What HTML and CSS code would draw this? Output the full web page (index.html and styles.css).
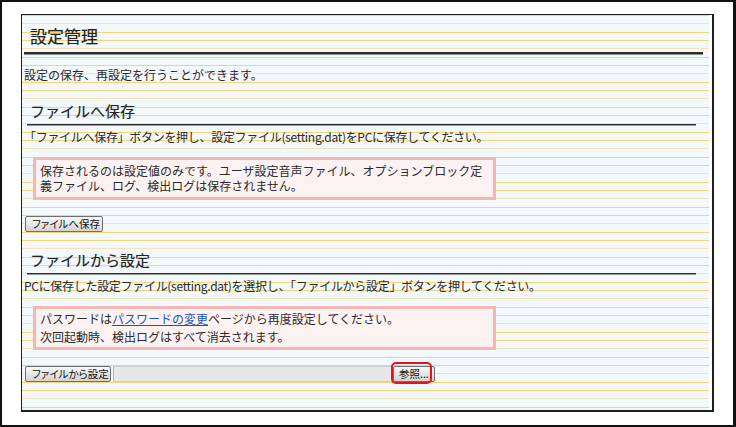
FILE: index.html
```html
<!DOCTYPE html>
<html lang="ja">
<head>
<meta charset="utf-8">
<title>設定管理</title>
<link rel="stylesheet" href="styles.css">
</head>
<body>
<div class="screen">
  <div class="panel">
    <h1 class="title">設定管理</h1>
    <p class="text">設定の保存、再設定を行うことができます。</p>

    <h2 class="section">ファイルへ保存</h2>
    <p class="text text-tight">「ファイルへ保存」ボタンを押し、設定ファイル(setting.dat)をPCに保存してください。</p>
    <div class="note">保存されるのは設定値のみです。ユーザ設定音声ファイル、オプションブロック定義ファイル、ログ、検出ログは保存されません。</div>
    <div class="actions">
      <button class="btn btn-save" type="button">ファイルへ保存</button>
    </div>

    <h2 class="section">ファイルから設定</h2>
    <p class="text text-tight">PCに保存した設定ファイル(setting.dat)を選択し、「ファイルから設定」ボタンを押してください。</p>
    <div class="note note-split">
      <span class="note-line">パスワードは<a class="link" href="#">パスワードの変更</a>ページから再度設定してください。</span>
      <span class="note-line">次回起動時、検出ログはすべて消去されます。</span>
    </div>
    <div class="actions">
      <button class="btn btn-load" type="button">ファイルから設定</button>
      <span class="file-field"></span>
      <span class="browse-wrap"><button class="btn btn-browse" type="button">参照...</button></span>
    </div>
  </div>
</div>
</body>
</html>
```

FILE: styles.css
```css
* { box-sizing: border-box; }

html, body {
  margin: 0;
  padding: 0;
  background: #fff;
}

body {
  font-family: "Noto Sans CJK JP", "Noto Sans", sans-serif;
  font-size: 12px;
  color: #2a2a2a;
}

.screen {
  width: 736px;
  height: 427px;
  border: 2px solid #111;
  border-right-width: 3px;
  background: #fff;
  padding: 12px 0 0 19px;
}

.panel {
  width: 693px;
  height: 398px;
  border: 1px solid #1e1e1e;
  border-right-width: 2px;
  border-bottom-width: 2px;
  background-color: #fff;
  background-image: repeating-linear-gradient(
    to bottom,
    #f6d57a 0, #f6d57a 1px,
    #f3f8fb 1px, #f3f8fb 8.33px,
    #f3e5ba 8.33px, #f3e5ba 9.33px,
    #f3f8fb 9.33px, #f3f8fb 16.67px,
    #f6d57a 16.67px, #f6d57a 17.67px,
    #f3f8fb 17.67px, #f3f8fb 25px
  );
  background-size: calc(100% - 3px) 100%;
  background-repeat: no-repeat;
  overflow: hidden;
}

.title {
  margin: 11px 9px 0 2px;
  padding: 0 0 6px 6px;
  font-size: 17px;
  line-height: 20px;
  font-weight: normal;
  color: #222;
  text-shadow: 0 0 1px rgba(0,0,0,0.3);
  border-bottom: 2px solid #2e2e2e;
  box-shadow: 0 1px 0 #8c8c8c;
}

.text {
  margin: 13px 0 0 2px;
  line-height: 16px;
  white-space: nowrap;
}

.text-tight {
  letter-spacing: -0.3px;
}

.section {
  margin: 19px 16px 0 5px;
  padding: 0 0 4px 3px;
  font-size: 15px;
  line-height: 18px;
  font-weight: normal;
  color: #222;
  text-shadow: 0 0 1px rgba(0,0,0,0.25);
  border-bottom: 1px solid #2e2e2e;
  box-shadow: 0 1px 0 #9a9a9a;
}

.section + .text {
  margin-top: 4px;
}

.note {
  width: 463px;
  margin: 12px 0 0 11px;
  padding: 3px 6px 4px 4px;
  border: 3px solid #f6b6b6;
  background: #fdf2f2;
  line-height: 15px;
  color: #2a2a2a;
}

.note-split {
  padding-top: 1px;
  padding-bottom: 2px;
}

.note-line {
  display: block;
  height: 17.5px;
  line-height: 17.5px;
}

.link {
  color: #1d55b3;
  text-decoration: underline;
}

.actions {
  display: flex;
  align-items: center;
  margin: 16px 0 0 3px;
  height: 16px;
}

.btn {
  height: 16px;
  padding: 0 4px;
  border: 1px solid #6f6f6f;
  border-radius: 2px;
  background: linear-gradient(to bottom, #f7f7f7 0%, #e6e6e6 55%, #d2d2d2 100%);
  font-family: "Noto Sans CJK JP", "Noto Sans", sans-serif;
  font-size: 10.5px;
  line-height: 14px;
  color: #111;
  font-feature-settings: "palt";
  white-space: nowrap;
  text-align: left;
}

.btn-save { width: 78px; padding-left: 6px; }
.btn-load { width: 86px; padding-left: 6px; }
.btn-browse { width: 42px; padding-left: 5px; }

.file-field {
  width: 280px;
  height: 16px;
  margin-left: 2px;
  border: 1px solid #cfcfcf;
  border-left-color: #b5b5b5;
  background: #e7e7e7;
}

.browse-wrap {
  position: relative;
  display: flex;
}

.browse-wrap::after {
  content: "";
  position: absolute;
  left: -2px;
  top: -4px;
  right: 3px;
  bottom: -2px;
  border: 2px solid #e4141b;
  border-radius: 5px;
}
```
